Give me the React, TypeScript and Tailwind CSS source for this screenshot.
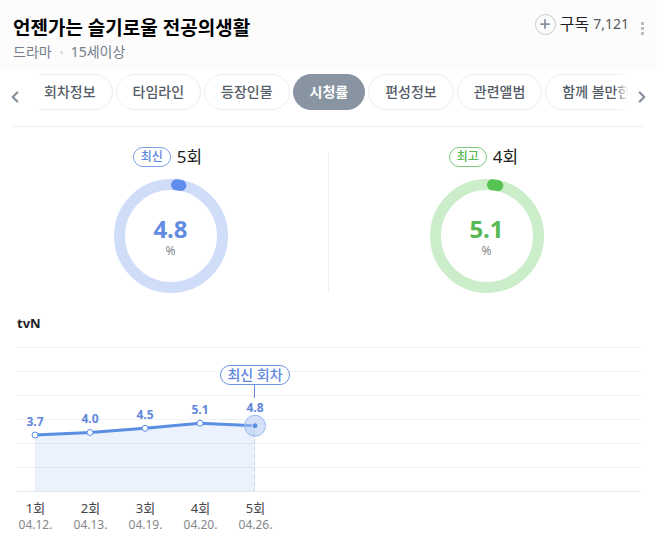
import { ChevronLeft, ChevronRight, Plus } from "lucide-react";
import clsx from "clsx";

interface RatingPoint {
  episode: string;
  date: string;
  value: number;
}

interface DonutProps {
  label: string;
  episode: string;
  value: number;
  tone: "blue" | "green";
}

const TABS = [
  "회차정보",
  "타임라인",
  "등장인물",
  "시청률",
  "편성정보",
  "관련앨범",
  "함께 볼만한",
];

const RATINGS: RatingPoint[] = [
  { episode: "1회", date: "04.12.", value: 3.7 },
  { episode: "2회", date: "04.13.", value: 4.0 },
  { episode: "3회", date: "04.19.", value: 4.5 },
  { episode: "4회", date: "04.20.", value: 5.1 },
  { episode: "5회", date: "04.26.", value: 4.8 },
];

const GRID_LINES = [7, 31, 55, 79, 103, 127];
const BASELINE = 151;
const STEP = 55;

const TONES = {
  blue: {
    badge: "border-[#7d9fe6] text-[#5f87dc]",
    value: "text-[#628ce2]",
    track: "#cfddf9",
    bar: "#5f8dec",
  },
  green: {
    badge: "border-[#7fcb7c] text-[#55b852]",
    value: "text-[#56b954]",
    track: "#cbedc9",
    bar: "#56c350",
  },
};

function Header() {
  return (
    <header className="flex items-start justify-between bg-[#fcfcfc] pt-3 pr-[10px] pb-2 pl-[13px]">
      <div className="pt-[2px]">
        <h1 className="text-[19px] leading-7 font-bold text-black">
          언젠가는 슬기로울 전공의생활
        </h1>
        <p className="flex items-center text-sm leading-5 text-[#747e8a]">
          드라마
          <span className="mx-2 size-[3px] rounded-full bg-[#d5d9de]" />
          15세이상
        </p>
      </div>
      <div className="flex items-start">
        <button type="button" className="flex items-center gap-1 leading-6">
          <span className="flex size-[21px] items-center justify-center rounded-full border border-[#c5c8cc] text-[#85909c]">
            <Plus className="size-[14px]" strokeWidth={3} />
          </span>
          <span className="text-base leading-6 text-[#1e1e23]">구독</span>
          <span className="text-sm leading-6 text-[#55585f]">7,121</span>
        </button>
        <button type="button" aria-label="더보기" className="ml-2 pt-[10px]">
          <svg width="10" height="14" viewBox="0 0 10 14" fill="#b9bec5">
            <rect x="4" y="0" width="3" height="3" />
            <rect x="4" y="5" width="3" height="3" />
            <rect x="4" y="10" width="3" height="3" />
          </svg>
        </button>
      </div>
    </header>
  );
}

function TabBar() {
  return (
    <nav className="mx-[13px] flex items-center border-b border-[#eeeff1] pt-1 pb-4">
      <button
        type="button"
        aria-label="이전"
        className="-ml-2 flex w-[32px] shrink-0 pt-[10px] pl-px text-[#85909c]"
      >
        <ChevronLeft className="size-[18px]" strokeWidth={3} />
      </button>
      <div className="relative min-w-0 flex-1 overflow-hidden">
        <ul className="-ml-[10px] flex gap-[3px]">
          {TABS.map((tab) => (
            <li key={tab} className="shrink-0">
              <a
                href="#"
                className={clsx(
                  "block h-9 rounded-full border px-4 text-sm leading-[34px]",
                  tab === "시청률"
                    ? "border-[#8894a2] bg-[#8894a2] font-bold text-white"
                    : "border-[#ebedf0] bg-white font-medium text-[#545d68]",
                )}
              >
                {tab}
              </a>
            </li>
          ))}
        </ul>
        <div className="absolute inset-y-0 left-0 w-1 bg-linear-to-r from-white to-white/0" />
        <div className="absolute inset-y-0 right-0 w-3 bg-linear-to-l from-white to-white/0" />
      </div>
      <button
        type="button"
        aria-label="다음"
        className="-mr-2 flex w-6 shrink-0 justify-end pt-[10px] pr-px text-[#85909c]"
      >
        <ChevronRight className="size-[18px]" strokeWidth={3} />
      </button>
    </nav>
  );
}

function Donut({ label, episode, value, tone }: DonutProps) {
  const colors = TONES[tone];
  // 둥근 끝 모양이 차지하는 만큼 양쪽을 줄인다
  const cap = 1.7;

  return (
    <div className="flex flex-col items-center gap-[10px]">
      <h2 className="flex items-center gap-[6px] pr-[6px] leading-6">
        <span
          className={clsx(
            "h-5 rounded-full border px-[7px] text-xs leading-[18px] font-medium",
            colors.badge,
          )}
        >
          {label}
        </span>
        <span className="text-[17px] leading-6 text-[#1e1e23]">{episode}</span>
      </h2>
      <div className="grid place-items-center">
        <svg
          viewBox="0 0 114 114"
          className="col-start-1 row-start-1 size-[114px]"
          fill="none"
          strokeWidth="11"
        >
          <circle cx="57" cy="57" r="51.5" stroke={colors.track} />
          <circle
            cx="57"
            cy="57"
            r="51.5"
            stroke={colors.bar}
            strokeLinecap="round"
            pathLength={100}
            strokeDasharray={`${value - cap * 2} 100`}
            transform={`rotate(${-90 + cap * 3.6} 57 57)`}
          />
        </svg>
        <div className="col-start-1 row-start-1 flex flex-col items-center pt-[6px]">
          <strong className={clsx("text-2xl leading-6 font-bold", colors.value)}>
            {value}
          </strong>
          <span className="text-xs leading-5 text-[#85878c]">%</span>
        </div>
      </div>
    </div>
  );
}

function RatingChart() {
  const points = RATINGS.map((item, i) => ({
    ...item,
    x: 18 + i * STEP,
    y: 95 - (item.value - 3.7) * 8.4,
  }));
  const line = points.map((p) => `${p.x},${p.y}`).join(" ");
  const last = points[points.length - 1];

  return (
    <section className="mr-4 ml-[17px] pt-5">
      <h3 className="text-[13px] leading-5 font-bold text-[#1e1e23]">tvN</h3>
      <svg className="mt-[7px] block h-[156px] w-full">
        {GRID_LINES.map((y) => (
          <rect key={y} x="0" y={y} width="100%" height="1" fill="#f1f2f5" />
        ))}
        <rect x="0" y={BASELINE} width="100%" height="1" fill="#e6e8eb" />

        <polygon
          points={`${points[0].x},${BASELINE} ${line} ${last.x},${BASELINE}`}
          fill="#5a95ee"
          fillOpacity="0.12"
        />
        <line
          x1={last.x - 0.5}
          y1={last.y}
          x2={last.x - 0.5}
          y2={BASELINE}
          stroke="#c5d2e6"
          strokeDasharray="4 3"
        />
        <polyline points={line} fill="none" stroke="#5a8ee2" strokeWidth="3" />

        {points.slice(0, -1).map((p) => (
          <circle
            key={p.episode}
            cx={p.x}
            cy={p.y}
            r="3"
            fill="#fff"
            stroke="#5a8ee2"
          />
        ))}
        <circle
          cx={last.x}
          cy={last.y}
          r="10.5"
          fill="#a9c4f2"
          fillOpacity="0.5"
          stroke="#9dbbed"
        />
        <circle
          cx={last.x}
          cy={last.y}
          r="3"
          fill="#5a8ee2"
          stroke="#dbe7fb"
        />

        {points.map((p) => (
          <text
            key={p.episode}
            x={p.x}
            y={p.y - 9 - (p === last ? 5 : 0)}
            textAnchor="middle"
            className="fill-[#5f87dc] text-xs font-bold"
          >
            {p.value.toFixed(1)}
          </text>
        ))}

        {/* 최신 회차 말풍선 */}
        <line
          x1={last.x - 0.5}
          y1="45"
          x2={last.x - 0.5}
          y2="58"
          stroke="#5f87dc"
        />
        <rect
          x={last.x - 34.5}
          y="25.5"
          width="69"
          height="19"
          rx="9.5"
          fill="#fff"
          stroke="#6b92e2"
        />
        <text
          x={last.x}
          y="40"
          textAnchor="middle"
          className="fill-[#5f87dc] text-sm font-medium"
        >
          최신 회차
        </text>
      </svg>
      <ol className="-ml-[9px] flex pt-1">
        {RATINGS.map((item) => (
          <li
            key={item.episode}
            className="flex w-[55px] shrink-0 flex-col text-center"
          >
            <span className="text-[13px] leading-4 text-[#424448]">
              {item.episode}
            </span>
            <span className="text-xs leading-[18px] text-[#85878c]">
              {item.date}
            </span>
          </li>
        ))}
      </ol>
    </section>
  );
}

export default function App() {
  return (
    <main className="bg-white font-['Noto_Sans','Noto_Sans_CJK_KR',sans-serif]">
      <Header />
      <TabBar />
      <section className="mx-[13px] flex items-end pt-[18px]">
        <div className="flex-1">
          <Donut label="최신" episode="5회" value={4.8} tone="blue" />
        </div>
        <div className="h-[140px] w-px bg-[#eeeff1]" />
        <div className="flex-1">
          <Donut label="최고" episode="4회" value={5.1} tone="green" />
        </div>
      </section>
      <RatingChart />
    </main>
  );
}
